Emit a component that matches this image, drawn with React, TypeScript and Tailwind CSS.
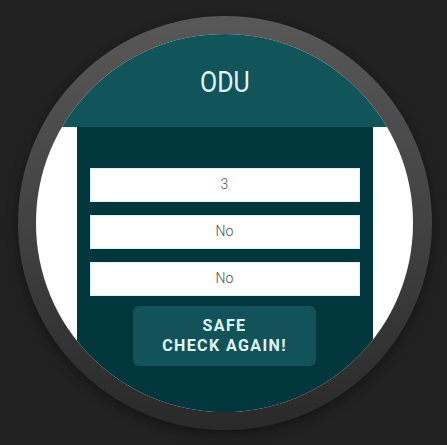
export default function App() {
  const rows = ["3", "No", "No"];
  return (
    <div className="w-[447px] h-[445px] bg-[#212121] flex items-center justify-center overflow-hidden pl-[2px]">
      <div className="w-[414px] h-[414px] rounded-full bg-gradient-to-b from-[#585858] via-[#424242] to-[#292929] flex items-center justify-center shadow-[0_4px_12px_rgba(0,0,0,0.4)]">
        <div className="w-[377px] h-[378px] rounded-full overflow-hidden bg-white flex flex-col">
          <div className="h-[93px] shrink-0 bg-[#11545a] flex items-center justify-center">
            <span
              className="text-[#e0f7fa] text-[29px] leading-none tracking-[0px] mt-[4px]"
              style={{ fontFamily: "Roboto, 'Liberation Sans', sans-serif", transform: "scaleX(0.86)" }}
            >
              ODU
            </span>
          </div>
          <div className="flex-1 flex justify-center">
            <div className="w-[296px] bg-[#00363c] flex flex-col items-center pt-[41px] px-[13px]">
              {rows.map((r, i) => (
                <div
                  key={i}
                  className="w-full h-[34px] bg-white border border-[#d8f3f5] flex items-center justify-center mb-[13px] text-[14px] text-[#4e4e4e] font-light"
                  style={{ fontFamily: "Roboto, 'Liberation Sans', sans-serif" }}
                >
                  {r}
                </div>
              ))}
              <div
                className="-mt-[3px] w-[183px] h-[60px] rounded-[6px] bg-[#12535a] flex flex-col items-center justify-center text-[#e0f7fa] text-[16px] font-bold leading-[20px] tracking-[1.4px]"
                style={{ fontFamily: "Roboto, 'Liberation Sans', sans-serif" }}
              >
                <span>SAFE</span>
                <span>CHECK AGAIN!</span>
              </div>
            </div>
          </div>
        </div>
      </div>
    </div>
  );
}
